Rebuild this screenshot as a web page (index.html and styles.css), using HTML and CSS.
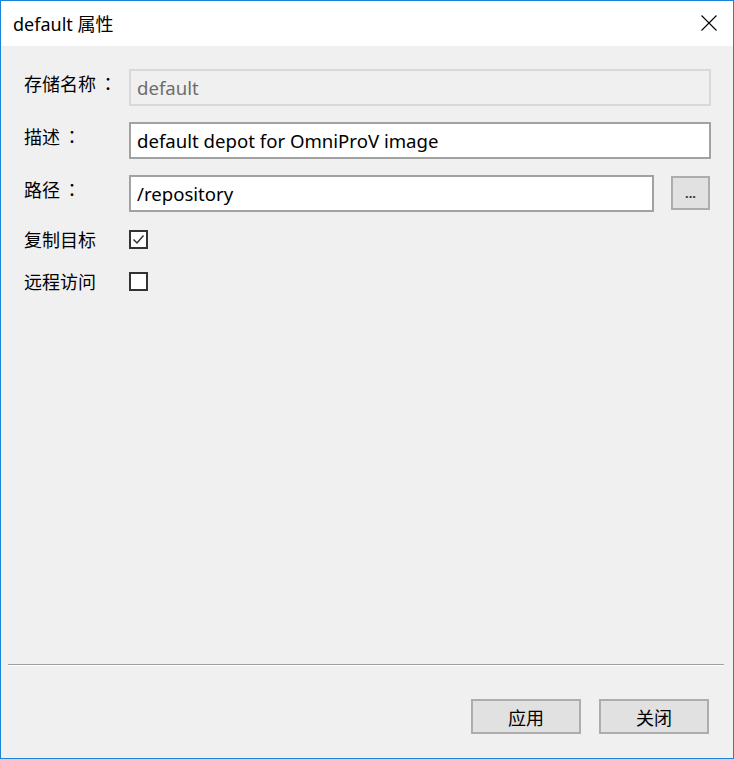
FILE: index.html
```html
<!DOCTYPE html>
<html lang="zh-CN">
<head>
<meta charset="utf-8">
<title>default 属性</title>
<link rel="stylesheet" href="styles.css">
</head>
<body>
<div class="window">
  <div class="titlebar">
    <span class="title">default 属性</span>
    <span class="close" aria-label="关闭">
      <svg width="16" height="16" viewBox="0 0 16 16"><path d="M0.5 0.5 L15.5 15.5 M15.5 0.5 L0.5 15.5" stroke="#000" stroke-width="1.1" fill="none"/></svg>
    </span>
  </div>
  <div class="content">
    <div class="form">
      <div class="row row-first">
        <label class="label">存储名称<span class="colon">：</span></label>
        <div class="field disabled">default</div>
      </div>
      <div class="row">
        <label class="label">描述<span class="colon">：</span></label>
        <div class="field">default depot for OmniProV image</div>
      </div>
      <div class="row">
        <label class="label">路径<span class="colon">：</span></label>
        <div class="field">/repository</div>
        <button class="browse">...</button>
      </div>
      <div class="row check-row check-first">
        <label class="label">复制目标</label>
        <span class="checkbox">
          <svg width="15" height="15" viewBox="0 0 15 15"><path d="M2.5 7.5 L6 11 L12.5 3.5" stroke="#333" stroke-width="1.5" fill="none"/></svg>
        </span>
      </div>
      <div class="row check-row check-second">
        <label class="label">远程访问</label>
        <span class="checkbox"></span>
      </div>
    </div>
    <div class="separator"></div>
    <div class="buttons">
      <button class="btn">应用</button>
      <button class="btn">关闭</button>
    </div>
  </div>
</div>
</body>
</html>
```
FILE: styles.css
```css
html, body {
  margin: 0;
  padding: 0;
}
body {
  font-family: "Noto Sans", "Noto Sans CJK SC", sans-serif;
  color: #000;
}
.window {
  width: 734px;
  height: 759px;
  box-sizing: border-box;
  border: 1px solid #1883d7;
  display: flex;
  flex-direction: column;
  background: #f0f0f0;
}
.titlebar {
  height: 45px;
  background: #fff;
  display: flex;
  align-items: center;
  justify-content: space-between;
  padding: 0 16px 0 12px;
  flex: none;
}
.title {
  font-size: 18px;
  font-family: "Noto Sans", "Noto Sans CJK SC", sans-serif;
  margin-top: -2px;
}
.close {
  display: flex;
  width: 16px;
  height: 16px;
  margin-top: -1px;
}
.content {
  flex: 1;
  display: flex;
  flex-direction: column;
}
.form {
  flex: 1;
  padding: 0 22px 0 23px;
  display: flex;
  flex-direction: column;
}
.row {
  display: flex;
  align-items: flex-start;
  margin-top: 16px;
}
.row-first {
  margin-top: 23px;
}
.label {
  width: 105px;
  flex: none;
  font-size: 18px;
  line-height: 24px;
  padding-top: 2px;
  font-family: "Noto Sans CJK SC", sans-serif;
  white-space: nowrap;
}
.colon {
  display: inline-block;
  width: 18px;
  text-align: center;
  padding-left: 3px;
  box-sizing: border-box;
  font-family: "Noto Sans CJK TC", sans-serif;
  font-feature-settings: "halt" 0;
}
.colon::before {
  content: "";
}
.field {
  flex: 1;
  height: 37px;
  box-sizing: border-box;
  border: 2px solid #a2a2a2;
  background: #fff;
  font-size: 18.6px;
  line-height: 33px;
  padding: 0 6px;
  white-space: nowrap;
  overflow: hidden;
  font-family: "Noto Sans", "Noto Sans CJK SC", sans-serif;
}
.field.disabled {
  background: #f0f0f0;
  border-color: #d9d9d9;
  color: #6d6d6d;
}
.browse {
  flex: none;
  width: 39px;
  height: 34px;
  margin: 1px 1px 0 17px;
  box-sizing: border-box;
  border: 2px solid #adadad;
  background: #e1e1e1;
  font-size: 13px;
  font-weight: bold;
  padding: 0;
  line-height: 20px;
  color: #333;
  font-family: "Noto Sans", sans-serif;
}
.check-row {
  align-items: center;
  height: 19px;
}
.check-row .label {
  padding-top: 0;
  line-height: 19px;
}
.check-first {
  margin-top: 18px;
}
.check-second {
  margin-top: 23px;
}
.checkbox {
  width: 19px;
  height: 19px;
  box-sizing: border-box;
  border: 2px solid #333;
  background: #fff;
  display: flex;
  align-items: center;
  justify-content: center;
}
.separator {
  margin: 0 9px 0 7px;
  height: 1px;
  border-top: 1px solid #a0a0a0;
  background: #fff;
  flex: none;
}
.buttons {
  display: flex;
  justify-content: flex-end;
  gap: 18px;
  padding: 33px 24px 24px 0;
  flex: none;
}
.btn {
  width: 110px;
  height: 35px;
  box-sizing: border-box;
  border: 2px solid #adadad;
  background: #e1e1e1;
  font-size: 18px;
  padding: 0;
  font-family: "Noto Sans CJK SC", sans-serif;
  color: #000;
}
```
